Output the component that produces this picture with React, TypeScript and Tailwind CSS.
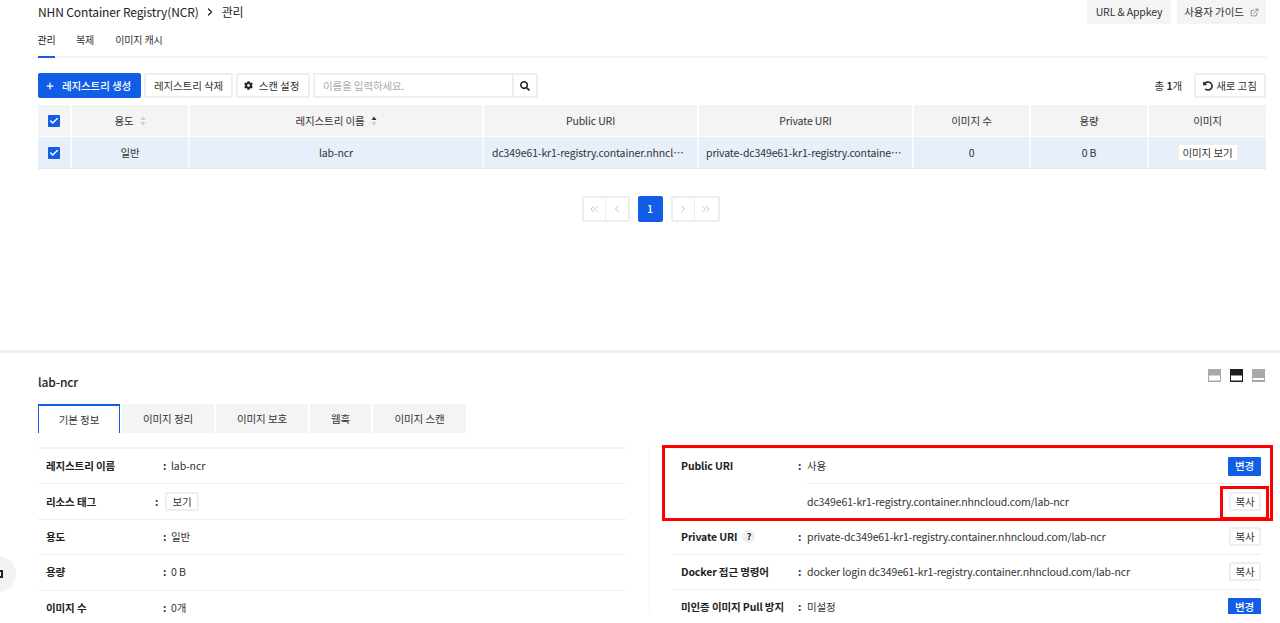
import { Check, ChevronLeft, ChevronRight, ChevronsLeft, ChevronsRight, ExternalLink, Plus } from 'lucide-react'
import { FaCog, FaSearch, FaUndoAlt } from 'react-icons/fa'

const columns = [
  { name: '용도', width: 'w-[118px]', sort: 'none' },
  { name: '레지스트리 이름', width: 'w-[294px]', sort: 'up' },
  { name: 'Public URI', width: 'w-[215px]' },
  { name: 'Private URI', width: 'w-[215px]' },
  { name: '이미지 수', width: 'w-[117px]' },
  { name: '용량', width: 'w-[118px]' },
  { name: '이미지', width: 'flex-1' },
]

const tabs = [
  { name: '기본 정보', width: 'w-[82px]', active: true },
  { name: '이미지 정리', width: 'w-[92px]' },
  { name: '이미지 보호', width: 'w-[92px]' },
  { name: '웹훅', width: 'w-[61px]' },
  { name: '이미지 스캔', width: 'w-[93px]' },
]

function SortIcon({ active }: { active?: boolean }) {
  return (
    <svg width="6" height="10" viewBox="0 0 6 10" className="ml-[6px]">
      <path d="M3 0.5 L5.5 4 H0.5 Z" fill={active ? '#333' : '#ccc'} />
      <path d="M3 9.5 L5.5 6 H0.5 Z" fill="#ccc" />
    </svg>
  )
}

function CheckBox() {
  return (
    <span className="flex h-[12px] w-[12px] items-center justify-center rounded-[1px] bg-[#125de6]">
      <Check size={10} strokeWidth={3.5} className="text-white" />
    </span>
  )
}

function SmallButton({ children, primary }: { children: React.ReactNode; primary?: boolean }) {
  return primary ? (
    <button className="flex h-[19px] w-[33px] items-center justify-center rounded-[1px] bg-[#125de6] font-medium text-white">
      {children}
    </button>
  ) : (
    <button className="flex h-[19px] w-[32px] items-center justify-center rounded-[2px] border-2 border-[#eeeeee] bg-white text-[#333]">
      {children}
    </button>
  )
}

function DetailRow({ label, children, action, labelWidth = 'w-[117px]', colonWidth = 'w-[8px]' }: { label: React.ReactNode; children: React.ReactNode; action?: React.ReactNode; labelWidth?: string; colonWidth?: string }) {
  return (
    <div className="flex h-[35.4px] items-center border-b border-[#eeeeee] pl-[8px]">
      <div className={`${labelWidth} shrink-0 whitespace-nowrap font-bold text-[#222]`}>{label}</div>
      <div className={`${colonWidth} shrink-0 font-bold`}>:</div>
      <div className="flex flex-1 items-center">{children}</div>
      {action}
    </div>
  )
}

function LayoutIcon({ fill, bottom }: { fill: string; bottom: string }) {
  return (
    <svg width="13" height="13" viewBox="0 0 13 13">
      <rect width="13" height="13" fill={fill} />
      <rect x="1" y={bottom === 'small' ? 9 : 6.5} width="11" height={bottom === 'small' ? 2 : 5} fill="#fff" />
    </svg>
  )
}

export default function App() {
  return (
    <div className="h-[623px] w-[1280px] overflow-hidden bg-white text-[10.5px] tracking-[-0.12px] text-[#333] [font-family:'Noto_Sans_CJK_KR','Noto_Sans',sans-serif]">
      {/* Top section */}
      <section className="h-[353px] border-b-[3px] border-[#eeeeee] pl-[38px] pr-[14px]">
        <div className="flex h-[24px] items-center justify-between">
          <div className="-mt-[1px] flex items-center text-[12px] leading-none text-[#222]">
            <span>NHN Container Registry(NCR)</span>
            <ChevronRight size={12} strokeWidth={2.5} className="mx-[5.5px]" />
            <span>관리</span>
          </div>
          <div className="flex gap-[6px]">
            <button className="flex h-[24px] w-[84px] items-center justify-center bg-[#f4f4f4]">URL &amp; Appkey</button>
            <button className="flex h-[24px] w-[89px] items-center justify-center gap-[6px] bg-[#f4f4f4]">
              사용자 가이드
              <ExternalLink size={9} className="text-[#777]" />
            </button>
          </div>
        </div>

        <div className="flex h-[34px] items-end gap-[21px] border-b-[2px] border-[#f4f4f4] text-[10px]">
          <div className="-mb-[2px] flex h-[26px] w-[17px] justify-center whitespace-nowrap border-b-[2px] border-[#125de6] text-[#222]">관리</div>
          <div className="h-[24px]">복제</div>
          <div className="h-[24px]">이미지 캐시</div>
        </div>

        <div className="mt-[15px] flex h-[25px] items-center gap-[3px]">
          <button className="flex h-[25px] w-[103px] items-center justify-center gap-[7px] rounded-[2px] bg-[#125de6] pr-[3px] font-medium text-white">
            <Plus size={10} strokeWidth={3} />
            레지스트리 생성
          </button>
          <button className="h-[25px] w-[89px] rounded-[2px] border-2 border-[#eeeeee]">레지스트리 삭제</button>
          <button className="flex h-[25px] w-[74px] items-center justify-center gap-[6px] rounded-[2px] border-2 border-[#eeeeee] pr-[3px]">
            <FaCog size={9} className="text-[#222]" />
            스캔 설정
          </button>
          <div className="flex h-[25px] w-[225px]">
            <div className="flex w-[199px] items-center rounded-l-[2px] border-2 border-r-0 border-[#eeeeee] pl-[8px] text-[#aaa]">이름을 입력하세요.</div>
            <button className="flex w-[26px] items-center justify-center rounded-r-[2px] border-2 border-[#eeeeee]">
              <FaSearch size={10} className="text-[#222]" />
            </button>
          </div>
          <div className="ml-auto mr-[9px]">총 <b>1</b>개</div>
          <button className="flex h-[25px] w-[72px] items-center justify-center gap-[3px] rounded-[2px] border-2 border-[#eeeeee]">
            <FaUndoAlt size={10} className="text-[#222]" />
            새로 고침
          </button>
        </div>

        {/* Table */}
        <div className="mt-[7px]">
          <div className="flex h-[32px] border-b border-white bg-[#f4f4f4]">
            <div className="flex w-[34px] items-center justify-center border-r-2 border-white pr-[1px]"><CheckBox /></div>
            {columns.map((c) => (
              <div key={c.name} className={`${c.width} flex items-center justify-center border-r-2 border-white last:border-r-0`}>
                {c.name}
                {c.sort && <SortIcon active={c.sort === 'up'} />}
              </div>
            ))}
          </div>
          <div className="flex h-[32px] border-b border-[#e6e6e6] bg-[#e7effb]">
            <div className="flex w-[34px] items-center justify-center border-r-2 border-white/70 pr-[1px]"><CheckBox /></div>
            <div className="flex w-[118px] items-center justify-center border-r-2 border-white/70">일반</div>
            <div className="flex w-[294px] items-center justify-center border-r-2 border-white/70">lab-ncr</div>
            <div className="flex w-[215px] items-center border-r-2 border-white/70 pl-[8px] pr-[11px]"><span className="truncate">dc349e61-kr1-registry.container.nhncloud.com/lab-ncr</span></div>
            <div className="flex w-[215px] items-center border-r-2 border-white/70 pl-[7px] pr-[9px]"><span className="truncate">private-dc349e61-kr1-registry.container.nhncloud.com/lab-ncr</span></div>
            <div className="flex w-[117px] items-center justify-center border-r-2 border-white/70">0</div>
            <div className="flex w-[118px] items-center justify-center border-r-2 border-white/70">0 B</div>
            <div className="flex flex-1 items-center justify-center">
              <button className="h-[19px] w-[62px] rounded-[2px] border-2 border-[#eeeeee] bg-white">이미지 보기</button>
            </div>
          </div>
        </div>

        {/* Pagination */}
        <div className="mt-[27px] flex justify-center pr-[3px] text-[#c4c4c4]">
          <div className="flex h-[26px] rounded-[2px] border-2 border-[#eeeeee]">
            <span className="flex w-[22px] items-center justify-center border-r border-[#eeeeee]"><ChevronsLeft size={12} /></span>
            <span className="flex w-[22px] items-center justify-center"><ChevronLeft size={12} /></span>
          </div>
          <div className="mx-[8px] flex h-[26px] w-[25px] items-center justify-center rounded-[2px] bg-[#125de6] font-medium text-white">1</div>
          <div className="flex h-[26px] rounded-[2px] border-2 border-[#eeeeee]">
            <span className="flex w-[22px] items-center justify-center border-r border-[#eeeeee]"><ChevronRight size={12} /></span>
            <span className="flex w-[23px] items-center justify-center"><ChevronsRight size={12} /></span>
          </div>
        </div>
      </section>

      {/* Detail section */}
      <section className="relative h-[261px] overflow-hidden pl-[38px] pr-[14px] pt-[19px]">
        <div className="flex h-[20px] items-center justify-between">
          <h2 className="text-[12px] font-medium text-[#222]">lab-ncr</h2>
          <div className="-mt-[13px] flex gap-[9px] pr-[1px]">
            <LayoutIcon fill="#a8a8a8" bottom="half" />
            <LayoutIcon fill="#1e1e1e" bottom="half" />
            <LayoutIcon fill="#a8a8a8" bottom="small" />
          </div>
        </div>

        <div className="mt-[12px] flex h-[29px] gap-[2px]">
          {tabs.map((t) => (
            <div
              key={t.name}
              className={`${t.width} flex items-center justify-center ${t.active ? 'border-x border-t-2 border-[#125de6] bg-white' : 'bg-[#f4f4f4]'}`}
            >
              {t.name}
            </div>
          ))}
        </div>

        <div className="mt-[14px] flex">
          {/* Left column */}
          <div className="w-[588px] border-t-2 border-[#f4f4f4]">
            <DetailRow label="레지스트리 이름">lab-ncr</DetailRow>
            <DetailRow label="리소스 태그" labelWidth="w-[109px]" colonWidth="w-[10px]">
              <button className="flex h-[19px] w-[34px] items-center justify-center rounded-[2px] border-2 border-[#eeeeee]">보기</button>
            </DetailRow>
            <DetailRow label="용도">일반</DetailRow>
            <DetailRow label="용량">0 B</DetailRow>
            <DetailRow label="이미지 수">0개</DetailRow>
          </div>

          {/* Right column */}
          <div className="ml-[23px] mr-[5px] flex-1 border-l border-[#f4f4f4] pl-[23px]">
            <div className="relative border-t-2 border-[#f4f4f4]">
              <div className="flex border-b border-[#eeeeee] pl-[8px]">
                <div className="w-[117px] shrink-0 pt-[9px] font-bold text-[#222]">Public URI</div>
                <div className="w-[9px] shrink-0 pt-[9px] font-bold">:</div>
                <div className="flex-1">
                  <div className="flex h-[35.4px] items-center border-b border-[#eeeeee]">
                    사용
                    <div className="ml-auto"><SmallButton primary>변경</SmallButton></div>
                  </div>
                  <div className="flex h-[34px] items-center">
                    dc349e61-kr1-registry.container.nhncloud.com/lab-ncr
                    <div className="ml-auto"><SmallButton>복사</SmallButton></div>
                  </div>
                </div>
              </div>
              {/* Red highlight boxes */}
              <div className="absolute -left-[11px] -right-[12px] -top-[4px] h-[76px] border-[3px] border-[#ff0000]" />
              <div className="absolute -right-[8px] top-[37px] h-[34px] w-[49px] border-[3px] border-[#ff0000]" />
            </div>
            <DetailRow
              label={<span className="flex items-center gap-[5px]">Private URI <span className="flex h-[13px] w-[13px] items-center justify-center rounded-full bg-[#eeeeee] text-[9px]">?</span></span>}
              colonWidth="w-[9px]"
            >
              private-dc349e61-kr1-registry.container.nhncloud.com/lab-ncr
              <div className="ml-auto"><SmallButton>복사</SmallButton></div>
            </DetailRow>
            <DetailRow label="Docker 접근 명령어" colonWidth="w-[9px]">
              docker login dc349e61-kr1-registry.container.nhncloud.com/lab-ncr
              <div className="ml-auto"><SmallButton>복사</SmallButton></div>
            </DetailRow>
            <DetailRow label="미인증 이미지 Pull 방지" colonWidth="w-[9px]">
              미설정
              <div className="ml-auto"><SmallButton primary>변경</SmallButton></div>
            </DetailRow>
          </div>
        </div>

        {/* Floating side button, cut by the window edge */}
        <div className="absolute -left-[20px] top-[203px] flex h-[36px] w-[36px] items-center justify-end rounded-full bg-[#f2f2f2] pr-[13px]">
          <span className="h-[8px] w-[8px] border-2 border-[#222]" />
        </div>
      </section>
    </div>
  )
}
